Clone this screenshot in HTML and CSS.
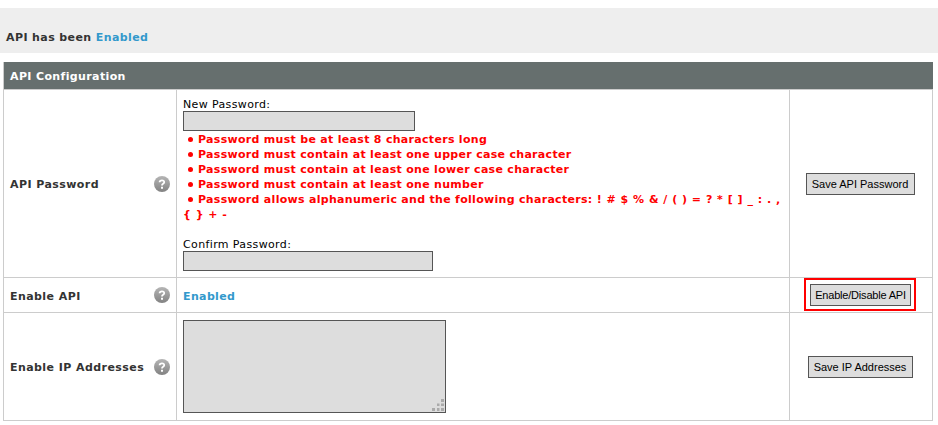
FILE: index.html
```html
<!DOCTYPE html>
<html lang="en"><head><meta charset="utf-8"><title>API Configuration</title><link rel="stylesheet" href="styles.css"></head>
<body>
<div class="status">API has been <span class="on">Enabled</span></div>
<main class="panel">
<h1 class="panel-title">API Configuration</h1>
<section class="row row-password">
<div class="label"><span>API Password</span><svg class="help" viewBox="0 0 16 16"><defs><linearGradient id="help-fill" x1="0" y1="0" x2="0" y2="1"><stop offset="0" stop-color="#b5b5b5"/><stop offset="1" stop-color="#828282"/></linearGradient></defs><circle cx="8" cy="8" r="8" fill="url(#help-fill)"/><path d="M5.6 6.2Q5.7 4.4 8 4.4T10.2 6.2Q10.2 7.1 9.1 7.7T8 9.5" fill="none" stroke="#fff" stroke-width="1.8"/><path d="M7 10.7h2v2H7z" fill="#fff"/></svg></div>
<div class="content">
<div class="caption">New Password:</div>
<input class="new-password" type="password" aria-label="New Password">
<div class="rules">
<div class="rule"><i class="dot"></i>Password must be at least 8 characters long</div>
<div class="rule"><i class="dot"></i>Password must contain at least one upper case character</div>
<div class="rule"><i class="dot"></i>Password must contain at least one lower case character</div>
<div class="rule"><i class="dot"></i>Password must contain at least one number</div>
<div class="rule"><i class="dot"></i>Password allows alphanumeric and the following characters: <span class="symbols">! # $ % &amp; / ( ) = ? * [ ] _ : . ,<br>{ } + -</span></div>
</div>
<div class="caption confirm">Confirm Password:</div>
<input class="confirm-password" type="password" aria-label="Confirm Password">
</div>
<div class="action"><button class="save-password">Save API Password</button></div>
</section>
<section class="row row-enable">
<div class="label"><span>Enable API</span><svg class="help" viewBox="0 0 16 16"><circle cx="8" cy="8" r="8" fill="url(#help-fill)"/><path d="M5.6 6.2Q5.7 4.4 8 4.4T10.2 6.2Q10.2 7.1 9.1 7.7T8 9.5" fill="none" stroke="#fff" stroke-width="1.8"/><path d="M7 10.7h2v2H7z" fill="#fff"/></svg></div>
<div class="content on"><span>Enabled</span></div>
<div class="action"><div class="highlight"><button class="toggle">Enable/Disable API</button></div></div>
</section>
<section class="row row-ip">
<div class="label"><span>Enable IP Addresses</span><svg class="help" viewBox="0 0 16 16"><circle cx="8" cy="8" r="8" fill="url(#help-fill)"/><path d="M5.6 6.2Q5.7 4.4 8 4.4T10.2 6.2Q10.2 7.1 9.1 7.7T8 9.5" fill="none" stroke="#fff" stroke-width="1.8"/><path d="M7 10.7h2v2H7z" fill="#fff"/></svg></div>
<div class="content"><div class="area"><textarea aria-label="IP Addresses"></textarea><svg class="grip" viewBox="0 0 12 12"><path d="M9 0h3v3H9zM5 4.5h2.5v2.5H5zM9 4.5h3v2.5H9zM0 9h3v3H0zM5 9h2.5v3H5zM9 9h3v3H9z" fill="#aaa"/></svg></div></div>
<div class="action"><button class="save-ip">Save IP Addresses</button></div>
</section>
</main>
</body></html>
```
FILE: styles.css
```css
* { box-sizing: border-box; }
body { margin: 0; padding-top: 8px; background: #fff; color: #333; font: 11px/15px "DejaVu Sans", sans-serif; letter-spacing: 0.37px; overflow: hidden; }
.status { height: 45px; padding: 22px 6px 0; background: #eee; font-weight: bold; letter-spacing: 0.4px; }
.on { color: #3399cc; font-weight: bold; }
.panel { width: 930px; margin: 9px 0 0 3px; border: 1px solid #ccc; border-top: 0; }
.panel-title { height: 28px; margin: 0 -1px 0 0; padding: 7px 6px 0; border-bottom: 1px solid #ccc; background: #666f6e; color: #fff; font-size: 11px; line-height: 15px; }
.row { display: grid; grid-template-columns: 173px 613px 1fr; }
.row + .row { border-top: 1px solid #ccc; }
.row-password { height: 187px; }
.row-enable { height: 35px; }
.row-ip { height: 108px; }
.label { display: flex; align-items: center; justify-content: space-between; padding: 0 6px; border-right: 1px solid #ccc; font-weight: bold; letter-spacing: 0.43px; white-space: nowrap; }
.label span, .content > span { padding-top: 1px; }
.row-enable .label span, .row-enable .content > span { padding-top: 2px; }
.help { width: 16px; height: 16px; }
.content { display: flex; flex-direction: column; align-items: flex-start; justify-content: center; padding: 0 6px; border-right: 1px solid #ccc; }
.caption { height: 15px; line-height: 17px; color: #000; }
input, textarea { display: block; margin: 0; border: 1px solid #555; border-radius: 0; background: #ddd; outline: 0; }
input { height: 20px; }
.new-password { width: 232px; }
.confirm-password { width: 250px; }
.rules { height: 90px; padding-top: 1px; color: #f00; font-weight: bold; letter-spacing: 0.3px; white-space: nowrap; }
.symbols { letter-spacing: 0.5px; }
.dot { display: inline-block; width: 5px; height: 5px; margin: 0 5px 1px; border-radius: 50%; background: #f00; }
.confirm { margin-top: 15px; }
.action { display: flex; align-items: center; justify-content: center; padding-right: 2px; }
button { height: 22px; padding: 0; border: 1px solid #555; border-radius: 0; background: #ddd; color: #000; font: 11px/18px "Liberation Sans", sans-serif; letter-spacing: 0; white-space: nowrap; }
.save-password { width: 109px; }
.toggle { width: 101px; letter-spacing: -0.2px; }
.save-ip { width: 105px; }
.highlight { display: flex; align-items: center; justify-content: flex-start; width: 112px; height: 33px; margin-bottom: 1px; padding-left: 4px; border: 2px solid #f00; }
.area { position: relative; width: 263px; height: 93px; }
textarea { width: 100%; height: 100%; resize: none; }
.grip { position: absolute; right: 2px; bottom: 2px; width: 12px; height: 12px; }
```
